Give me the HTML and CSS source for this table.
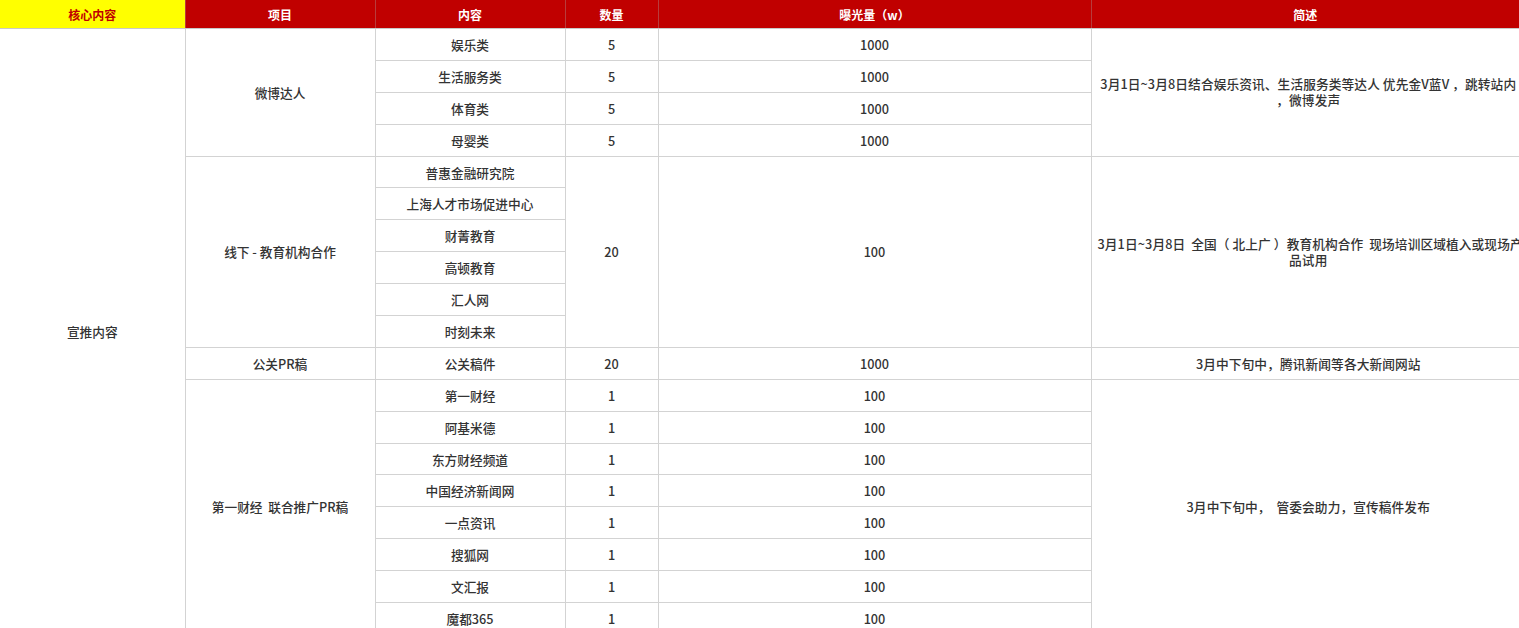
FILE: index.html
```html
<!DOCTYPE html>
<html lang="zh-CN">
<head>
<meta charset="utf-8">
<title>宣推内容</title>
<link rel="stylesheet" href="styles.css">
</head>
<body>
<table class="plan">
  <colgroup>
    <col class="c-core"><col class="c-item"><col class="c-content"><col class="c-num"><col class="c-exp"><col class="c-desc">
  </colgroup>
  <thead>
    <tr class="head">
      <th class="core-h">核心内容</th>
      <th>项目</th>
      <th>内容</th>
      <th>数量</th>
      <th>曝光量（w）</th>
      <th>简述</th>
    </tr>
  </thead>
  <tbody>
    <tr>
      <td class="core" rowspan="19">宣推内容</td>
      <td rowspan="4">微博达人</td>
      <td>娱乐类</td><td>5</td><td>1000</td>
      <td class="desc" rowspan="4"><span class="ln">3月1日~3月8日结合娱乐资讯、生活服务类等达人 优先金V蓝V ，跳转站内</span><span class="ln">，微博发声</span></td>
    </tr>
    <tr><td>生活服务类</td><td>5</td><td>1000</td></tr>
    <tr><td>体育类</td><td>5</td><td>1000</td></tr>
    <tr><td>母婴类</td><td>5</td><td>1000</td></tr>
    <tr>
      <td rowspan="6">线下 - 教育机构合作</td>
      <td>普惠金融研究院</td>
      <td rowspan="6">20</td>
      <td rowspan="6">100</td>
      <td class="desc" rowspan="6"><span class="ln">3月1日~3月8日&nbsp;&nbsp;全国（ 北上广 ）教育机构合作&nbsp;&nbsp;现场培训区域植入或现场产</span><span class="ln">品试用</span></td>
    </tr>
    <tr><td>上海人才市场促进中心</td></tr>
    <tr><td>财菁教育</td></tr>
    <tr><td>高顿教育</td></tr>
    <tr><td>汇人网</td></tr>
    <tr><td>时刻未来</td></tr>
    <tr>
      <td>公关PR稿</td><td>公关稿件</td><td>20</td><td>1000</td>
      <td class="desc">3月中下旬中，腾讯新闻等各大新闻网站</td>
    </tr>
    <tr>
      <td rowspan="8">第一财经&nbsp;&nbsp;联合推广PR稿</td>
      <td>第一财经</td><td>1</td><td>100</td>
      <td class="desc" rowspan="8">3月中下旬中，&nbsp;&nbsp;管委会助力，宣传稿件发布</td>
    </tr>
    <tr><td>阿基米德</td><td>1</td><td>100</td></tr>
    <tr><td>东方财经频道</td><td>1</td><td>100</td></tr>
    <tr><td>中国经济新闻网</td><td>1</td><td>100</td></tr>
    <tr><td>一点资讯</td><td>1</td><td>100</td></tr>
    <tr><td>搜狐网</td><td>1</td><td>100</td></tr>
    <tr><td>文汇报</td><td>1</td><td>100</td></tr>
    <tr><td>魔都365</td><td>1</td><td>100</td></tr>
  </tbody>
</table>
</body>
</html>
```
FILE: styles.css
```css
html, body {
  margin: 0;
  padding: 0;
  background: #ffffff;
}
body {
  font-family: "Noto Sans CJK SC", "Liberation Sans", sans-serif;
  font-size: 12.7px;
  font-weight: 500;
  color: #333333;
  overflow: hidden;
}
.plan {
  width: 1519px;
  border-collapse: collapse;
  table-layout: fixed;
}
.c-core { width: 185px; }
.c-item { width: 190px; }
.c-content { width: 190px; }
.c-num { width: 93px; }
.c-exp { width: 433px; }
.c-desc { width: 428px; }

.head th {
  height: 28px;
  padding: 0;
  background: #c00000;
  color: #ffffff;
  font-weight: 700;
  font-size: 12px;
  text-align: center;
  vertical-align: middle;
  border-left: 1px solid #b83c3c;
  border-bottom: 1px solid #c9c9c9;
}
.head th.core-h {
  background: #ffff00;
  color: #c00000;
  border-left: none;
}
.plan td {
  height: 30.9px;
  padding: 0;
  text-align: center;
  vertical-align: middle;
  border: 1px solid #d3d3d3;
  line-height: 15px;
  white-space: nowrap;
  overflow: hidden;
}
.plan td.core {
  border-left: none;
  border-top: none;
  border-bottom: none;
}
.plan td.desc {
  padding: 0 0 0 6px;
  border-right: none;
  letter-spacing: 0.1px;
}
.ln {
  display: block;
  line-height: 16px;
  white-space: nowrap;
}
```
